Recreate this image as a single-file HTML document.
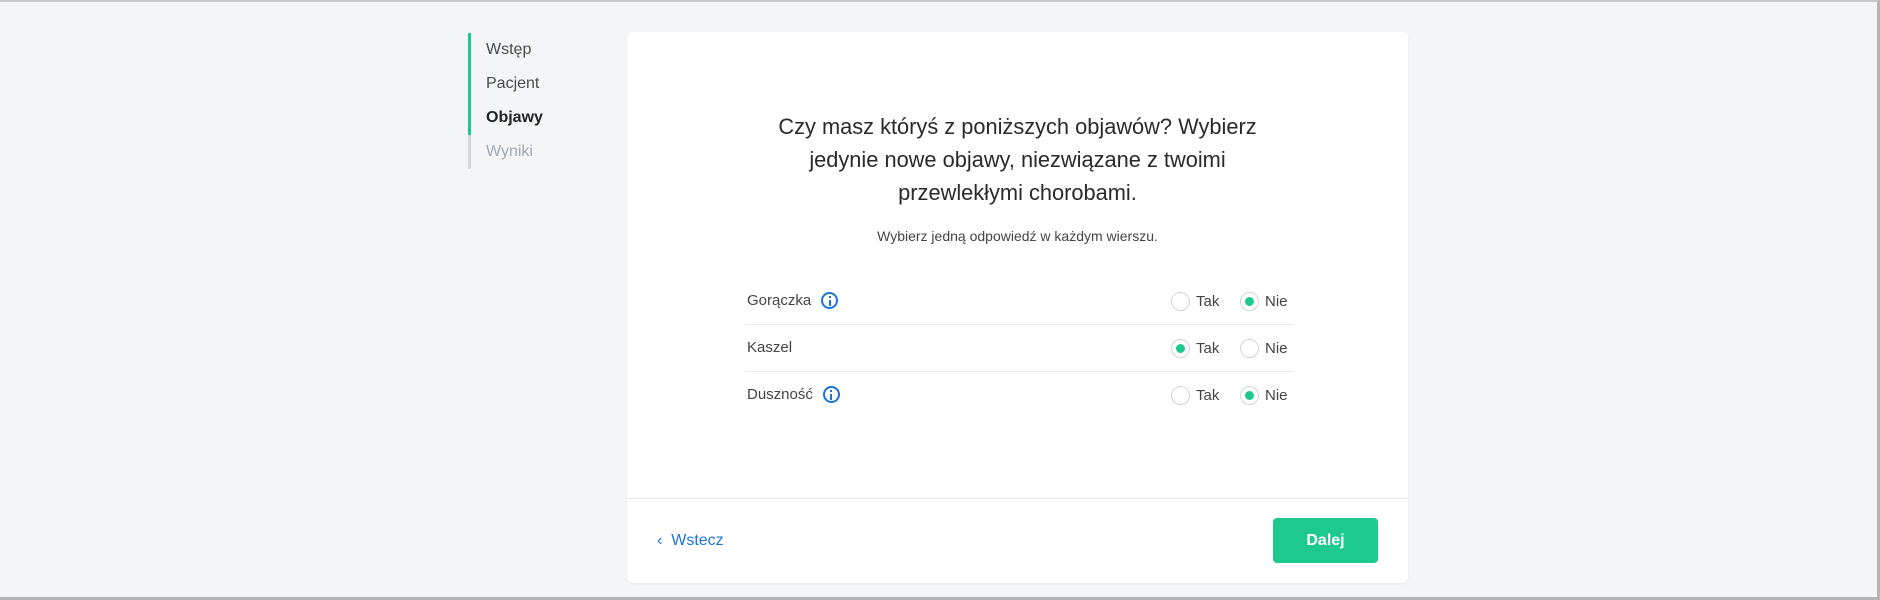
<!DOCTYPE html>
<html><head><meta charset="utf-8"><style>
*{box-sizing:border-box;margin:0;padding:0}
body{width:1880px;height:600px;background:#f3f5f7;font-family:"Liberation Sans",sans-serif;position:relative;overflow:hidden;color:#333}
.frame{position:absolute;left:0;top:0;width:1880px;height:600px;border-top:2px solid #c8c8c8;border-right:3px solid #b5b5b5;border-bottom:3px solid #b5b5b5;pointer-events:none}
.nav{position:absolute;left:468px;top:33px}
.nav div{height:34px;line-height:34px;padding-left:15px;font-size:16px;color:#4a4a4a;border-left:3px solid #1ec98f}
.nav .b{font-weight:bold;color:#222}
.nav .g{color:#a0a8b4;border-left-color:#d3d7dc}
.card{position:absolute;left:627px;top:32px;width:781px;height:551px;background:#fff;border-radius:6px;box-shadow:0 1px 2px rgba(0,0,0,.06)}
h1{position:absolute;left:0;width:781px;top:78px;text-align:center;font-weight:normal;font-size:21.8px;line-height:33px;color:#2a2a2a}
.sub{position:absolute;left:0;width:781px;top:196px;text-align:center;font-size:14px;color:#444}
.row{position:absolute;left:118px;width:548px;height:47px;font-size:15px;color:#444}
.row.d{border-bottom:1px solid #e6e8eb}
.lab{position:absolute;left:2px;top:14px;display:flex;align-items:center}
.info{width:17px;height:17px;border:2px solid #1b74d8;border-radius:50%;margin-left:10px;position:relative}
.info:before{content:"";position:absolute;left:5.5px;top:2px;width:2px;height:2px;background:#1b74d8}
.info:after{content:"";position:absolute;left:5.5px;top:5.5px;width:2px;height:6px;background:#1b74d8}
.r{position:absolute;top:14px;display:flex;align-items:center}
.c{width:19px;height:19px;border:1px solid #cfd4da;border-radius:50%;margin-right:6px;position:relative}
.c.on:after{content:"";position:absolute;left:4px;top:4px;width:9px;height:9px;border-radius:50%;background:#1ec98f}
.hr{position:absolute;left:0;top:466px;width:781px;border-top:1px solid #e6e8eb}
.back{position:absolute;left:30px;top:500px;color:#1b74d8;font-size:16px}
.btn{position:absolute;left:646px;top:486px;width:105px;height:45px;background:#1ec98f;border-radius:4px;color:#fff;font-weight:bold;font-size:16px;text-align:center;line-height:45px}
</style></head><body>
<div class="nav"><div>Wstęp</div><div>Pacjent</div><div class="b">Objawy</div><div class="g">Wyniki</div></div>
<div class="card">
<h1>Czy masz któryś z poniższych objawów? Wybierz<br>jedynie nowe objawy, niezwiązane z twoimi<br>przewlekłymi chorobami.</h1>
<div class="sub">Wybierz jedną odpowiedź w każdym wierszu.</div>
<div class="row d" style="top:246px"><div class="lab">Gorączka<span class="info"></span></div><div class="r" style="left:426px"><span class="c"></span>Tak</div><div class="r" style="left:495px"><span class="c on"></span>Nie</div></div>
<div class="row d" style="top:293px"><div class="lab">Kaszel</div><div class="r" style="left:426px"><span class="c on"></span>Tak</div><div class="r" style="left:495px"><span class="c"></span>Nie</div></div>
<div class="row" style="top:340px"><div class="lab">Duszność<span class="info"></span></div><div class="r" style="left:426px"><span class="c"></span>Tak</div><div class="r" style="left:495px"><span class="c on"></span>Nie</div></div>
<div class="hr"></div>
<div class="back">‹&nbsp; Wstecz</div>
<div class="btn">Dalej</div>
</div>
<div class="frame"></div>
</body></html>
